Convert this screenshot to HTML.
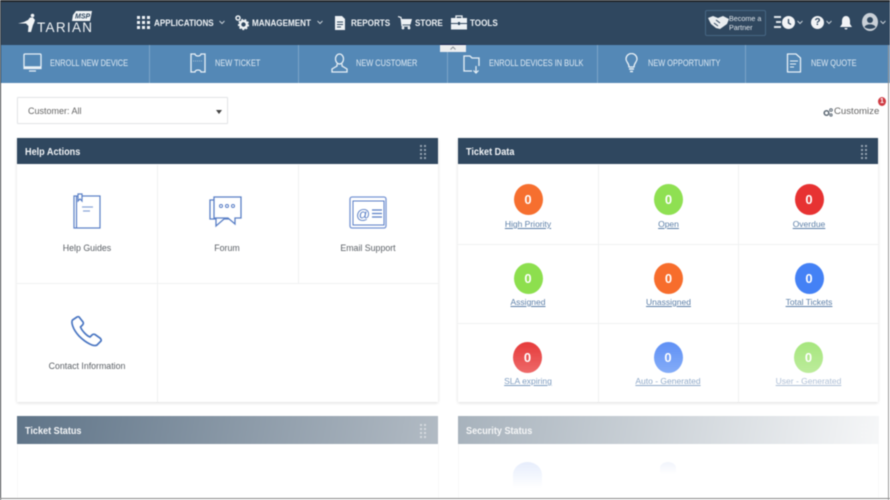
<!DOCTYPE html>
<html><head><meta charset="utf-8">
<style>
html,body{margin:0;padding:0;background:#fff}
#p{position:relative;width:890px;height:500px;overflow:hidden;background:#fff;font-family:"Liberation Sans",sans-serif;filter:blur(.5px)}
#p div,#p span,#p a,#p svg{position:absolute}
.t{white-space:nowrap;line-height:12px}
.nav{color:#eef2f5;font-size:9px;font-weight:bold;top:17px;transform:scaleX(.9);transform-origin:0 0}
.bar{color:#dfeaf3;font-size:9px;top:57px;transform:scaleX(.82);transform-origin:0 0}
.sep{top:45px;width:1px;height:38px;background:#7ba4c8}
.hd{background:#2f475f}
.ht{color:#f2f4f6;font-size:10px;font-weight:bold;transform:scaleX(.91);transform-origin:0 0}
.c{width:29px;height:31px;border-radius:50%;color:#fff;font-weight:bold;font-size:13px;text-align:center;line-height:31px}
.l{width:140px;text-align:center;font-size:8.5px;color:#5c7fa8;text-decoration:underline;line-height:12px}
.g{width:140px;text-align:center;font-size:8.8px;color:#5b6066;line-height:12px}
.ln{background:#f0f1f2}
</style></head><body>
<div id="p">
<div style="left:0;top:0;width:890px;height:45px;background:#2f475f"></div>
<div style="left:0;top:0;width:890px;height:2px;background:#23272c"></div>
<div style="left:0;top:45px;width:890px;height:38px;background:#5488b6"></div>

<!-- logo -->
<svg style="left:15px;top:8px" width="82" height="30" viewBox="0 0 82 30">
<path d="M3 15.500L9 14L13 12L15 9.500L18 9.500L20 12L19 15L18 17L16 24L13 24L13.500 18L11 15.500Z" fill="#f1f4f6"/>
<circle cx="17.500" cy="7.500" r="1.800" fill="#f1f4f6"/>
<text x="22" y="24" font-size="13.500" textLength="55" lengthAdjust="spacing" fill="#f1f4f6" font-family="Liberation Sans">TARIAN</text>
<path d="M58 7L61 3H77L75 13H57Z" fill="#f1f4f6"/>
<text x="60" y="10.500" font-size="7" font-weight="bold" font-style="italic" fill="#2f475f" font-family="Liberation Sans">MSP</text>
</svg>

<!-- nav -->
<svg style="left:137px;top:15px" width="13" height="15" viewBox="0 0 13 15"><g fill="#eef2f5"><rect x="0" y="1" width="3" height="3"/><rect x="5" y="1" width="3" height="3"/><rect x="10" y="1" width="3" height="3"/><rect x="0" y="6" width="3" height="3"/><rect x="5" y="6" width="3" height="3"/><rect x="10" y="6" width="3" height="3"/><rect x="0" y="11" width="3" height="3"/><rect x="5" y="11" width="3" height="3"/><rect x="10" y="11" width="3" height="3"/></g></svg>
<div class="t nav" style="left:154px">APPLICATIONS</div>
<svg style="left:219px;top:20px" width="6" height="5" viewBox="0 0 6 5"><path d="M.5 1L3 3.500L5.500 1" fill="none" stroke="#c5ced6"/></svg>
<svg style="left:235px;top:15px" width="14" height="16" viewBox="0 0 14 16"><circle cx="3" cy="3" r="2" fill="none" stroke="#eef2f5" stroke-width="1.500"/><circle cx="8.500" cy="9.500" r="3.400" fill="none" stroke="#eef2f5" stroke-width="2.400"/><circle cx="8.500" cy="9.500" r="5" fill="none" stroke="#eef2f5" stroke-width="1.200" stroke-dasharray="2 1.500"/></svg>
<div class="t nav" style="left:252px">MANAGEMENT</div>
<svg style="left:317px;top:20px" width="6" height="5" viewBox="0 0 6 5"><path d="M.5 1L3 3.500L5.500 1" fill="none" stroke="#c5ced6"/></svg>
<svg style="left:335px;top:16px" width="10" height="14" viewBox="0 0 10 14"><path d="M0 0H7L10 3V14H0Z" fill="#eef2f5"/><path d="M2 6H8M2 8.500H8M2 11H6" stroke="#2f475f"/></svg>
<div class="t nav" style="left:351px">REPORTS</div>
<svg style="left:398px;top:16px" width="14" height="14" viewBox="0 0 14 14"><path d="M0 0.500L3 1.500L4 10H12" fill="none" stroke="#eef2f5" stroke-width="1.200"/><path d="M3 3H14L12.500 8.500H4Z" fill="#eef2f5"/><circle cx="5" cy="12" r="1.400" fill="#eef2f5"/><circle cx="11" cy="12" r="1.400" fill="#eef2f5"/></svg>
<div class="t nav" style="left:415px">STORE</div>
<svg style="left:451px;top:15px" width="16" height="15" viewBox="0 0 16 15"><path d="M5 3V1H11V3" fill="none" stroke="#eef2f5" stroke-width="1.300"/><rect x="0" y="3" width="16" height="5" fill="#eef2f5"/><rect x="0" y="9" width="16" height="5.500" fill="#eef2f5"/><rect x="7" y="7" width="2" height="3" fill="#2f475f"/></svg>
<div class="t nav" style="left:470px">TOOLS</div>

<!-- right nav -->
<div style="left:705px;top:10px;width:59px;height:24px;border:1px solid #466683;border-radius:2px"></div>
<svg style="left:708px;top:15px" width="21" height="15" viewBox="0 0 21 15"><path d="M0 3L5 1L10 3L15 1L21 4L19 9L12 14L8 13L3 9Z" fill="#e9edf0"/><path d="M8 5L12 8M6 8L10 11" stroke="#2f475f"/></svg>
<div class="t" style="left:729px;top:14px;color:#dfe5ea;font-size:7.200px;line-height:9px;">Become a<br>Partner</div>
<div style="left:774px;top:16px;width:7px;height:2px;background:#dfe5ea"></div>
<div style="left:776px;top:21px;width:5px;height:2px;background:#dfe5ea"></div>
<div style="left:774px;top:26px;width:7px;height:2px;background:#dfe5ea"></div>
<svg style="left:782px;top:16px" width="13" height="13" viewBox="0 0 13 13"><circle cx="6.500" cy="6.500" r="6.500" fill="#f2f4f6"/><path d="M6.500 3V7L9 8.500" fill="none" stroke="#2f475f" stroke-width="1.300"/></svg>
<svg style="left:797px;top:20px" width="6" height="5" viewBox="0 0 6 5"><path d="M.5 1L3 3.500L5.500 1" fill="none" stroke="#c5ced6"/></svg>
<div style="left:811px;top:16px;width:13px;height:13px;border-radius:50%;background:#f2f4f6;color:#2f475f;font-size:10px;font-weight:bold;text-align:center;line-height:13px">?</div>
<svg style="left:826px;top:20px" width="6" height="5" viewBox="0 0 6 5"><path d="M.5 1L3 3.500L5.500 1" fill="none" stroke="#c5ced6"/></svg>
<svg style="left:840px;top:16px" width="12" height="14" viewBox="0 0 12 14"><path d="M6 0C3 0 2 3 2 5V8L0 11H12L10 8V5C10 3 9 0 6 0Z" fill="#f2f4f6"/><path d="M4.500 12H7.500A1.500 1.500 0 0 1 4.500 12Z" fill="#f2f4f6"/></svg>
<svg style="left:862px;top:13px" width="16" height="18" viewBox="0 0 16 18"><ellipse cx="8" cy="9" rx="8" ry="9" fill="#c9d0d7"/><circle cx="8" cy="7" r="3" fill="#2f475f"/><path d="M2.500 14C4 10.500 12 10.500 13.500 14C11 16.500 5 16.500 2.500 14Z" fill="#2f475f"/></svg>
<svg style="left:880px;top:20px" width="6" height="5" viewBox="0 0 6 5"><path d="M.5 1L3 3.500L5.500 1" fill="none" stroke="#c5ced6"/></svg>

<!-- blue bar -->
<div class="sep" style="left:149px"></div><div class="sep" style="left:298px"></div><div class="sep" style="left:447px"></div><div class="sep" style="left:597px"></div><div class="sep" style="left:745px"></div>
<svg style="left:23px;top:53px" width="20" height="20" viewBox="0 0 20 20"><rect x="1" y="1" width="17" height="13" rx="1" fill="none" stroke="#e8f0f6" stroke-width="1.300"/><path d="M1 14H18V15.500H1ZM6 18H13" stroke="#e8f0f6" stroke-width="1.200" fill="#e8f0f6"/></svg>
<div class="t bar" style="left:50px">ENROLL NEW DEVICE</div>
<svg style="left:190px;top:53px" width="16" height="20" viewBox="0 0 16 20"><path d="M1 1H5A3 2 0 0 0 11 1H15V19H11A3 2 0 0 0 5 19H1Z" fill="none" stroke="#e8f0f6" stroke-width="1.300"/><path d="M3 8H13" stroke="#e8f0f6" stroke-width=".6" stroke-dasharray="1 1"/></svg>
<div class="t bar" style="left:215px">NEW TICKET</div>
<svg style="left:331px;top:53px" width="17" height="20" viewBox="0 0 17 20"><ellipse cx="8.500" cy="6" rx="4" ry="5" fill="none" stroke="#e8f0f6" stroke-width="1.300"/><path d="M6 11L6 13L1 16V19H16V16L11 13L11 11" fill="none" stroke="#e8f0f6" stroke-width="1.300"/></svg>
<div class="t bar" style="left:356px">NEW CUSTOMER</div>
<svg style="left:463px;top:54px" width="18" height="20" viewBox="0 0 18 20"><path d="M9 17H1V2H7L9 4H16V12" fill="none" stroke="#e8f0f6" stroke-width="1.300"/><path d="M13 12V19M10.500 16.500L13 19L15.500 16.500" fill="none" stroke="#e8f0f6" stroke-width="1.200"/></svg>
<div class="t bar" style="left:489px">ENROLL DEVICES IN BULK</div>
<svg style="left:625px;top:53px" width="13" height="20" viewBox="0 0 13 20"><path d="M4 14C4 10 1 9 1 6A5.500 5.500 0 0 1 12 6C12 9 9 10 9 14Z" fill="none" stroke="#e8f0f6" stroke-width="1.300"/><path d="M4 16H9M5 18.500H8" stroke="#e8f0f6" stroke-width="1.500"/></svg>
<div class="t bar" style="left:648px">NEW OPPORTUNITY</div>
<svg style="left:786px;top:53px" width="16" height="20" viewBox="0 0 16 20"><path d="M1.500 1H10L14.500 5V19H1.500Z" fill="none" stroke="#e8f0f6" stroke-width="1.300" stroke-linejoin="round"/><path d="M4 8H12M4 11H10M4 14H8" stroke="#e8f0f6"/></svg>
<div class="t bar" style="left:811px">NEW QUOTE</div>

<!-- collapse tab -->
<div style="left:440px;top:45px;width:26px;height:7px;background:#eceef0"></div>
<div style="left:440px;top:44px;width:26px;height:1px;background:#1d2a55"></div>
<svg style="left:450px;top:46px" width="6" height="5" viewBox="0 0 6 5"><path d="M.5 3.500L3 1L5.500 3.500" fill="none" stroke="#8b939b"/></svg>

<!-- select -->
<div style="left:17px;top:97px;width:209px;height:25px;border:1px solid #e3e5e7;border-radius:1px;box-shadow:0 0 1px #eee"></div>
<div class="t" style="left:28px;top:105px;font-size:9px;color:#666">Customer: All</div>
<div style="left:216px;top:110px;width:0;height:0;border-left:3px solid transparent;border-right:3px solid transparent;border-top:4px solid #444"></div>

<!-- customize -->
<svg style="left:823px;top:108px" width="10" height="9" viewBox="0 0 10 9"><circle cx="3.500" cy="5" r="2.300" fill="none" stroke="#5b6773" stroke-width="1.500"/><circle cx="8" cy="2" r="1.300" fill="none" stroke="#5b6773"/><circle cx="8" cy="7" r="1.100" fill="none" stroke="#5b6773"/></svg>
<div class="t" style="left:834px;top:106px;font-size:9.600px;color:#666">Customize</div>
<div style="left:878px;top:97px;width:8px;height:9px;border-radius:50%;background:#cf3b43;color:#fff;font-size:7px;font-weight:bold;text-align:center;line-height:9px">1</div>

<!-- Help Actions panel -->
<div style="left:17px;top:138px;width:421px;height:264px;box-shadow:0 1px 3px rgba(0,0,0,.14);background:#fff"></div>
<div class="hd" style="left:17px;top:138px;width:421px;height:26px"></div>
<div class="t ht" style="left:25px;top:147px">Help Actions</div>
<div class="ln" style="left:157px;top:165px;width:1px;height:237px"></div>
<div class="ln" style="left:298px;top:165px;width:1px;height:118px"></div>
<div class="ln" style="left:17px;top:283px;width:421px;height:1px"></div>

<!-- Ticket Data panel -->
<div style="left:458px;top:138px;width:420px;height:264px;box-shadow:0 1px 3px rgba(0,0,0,.14);background:#fff"></div>
<div class="hd" style="left:458px;top:138px;width:420px;height:26px"></div>
<div class="t ht" style="left:466px;top:147px">Ticket Data</div>
<div class="ln" style="left:598px;top:165px;width:1px;height:237px"></div>
<div class="ln" style="left:738px;top:165px;width:1px;height:237px"></div>
<div class="ln" style="left:458px;top:244px;width:420px;height:1px"></div>
<div class="ln" style="left:458px;top:323px;width:420px;height:1px"></div>

<!-- drag dots -->
<svg style="left:420px;top:145px" width="7" height="14"><g fill="#94a3b1"><rect x="0" y="0" width="2" height="2"/><rect x="4" y="0" width="2" height="2"/><rect x="0" y="4" width="2" height="2"/><rect x="4" y="4" width="2" height="2"/><rect x="0" y="8" width="2" height="2"/><rect x="4" y="8" width="2" height="2"/><rect x="0" y="12" width="2" height="2"/><rect x="4" y="12" width="2" height="2"/></g></svg>
<svg style="left:861px;top:145px" width="7" height="14"><g fill="#94a3b1"><rect x="0" y="0" width="2" height="2"/><rect x="4" y="0" width="2" height="2"/><rect x="0" y="4" width="2" height="2"/><rect x="4" y="4" width="2" height="2"/><rect x="0" y="8" width="2" height="2"/><rect x="4" y="8" width="2" height="2"/><rect x="0" y="12" width="2" height="2"/><rect x="4" y="12" width="2" height="2"/></g></svg>

<!-- help icons -->
<svg style="left:72px;top:193px" width="30" height="36" viewBox="0 0 30 36"><g fill="none" stroke="#5a7fc6" stroke-width="1.200"><rect x="2" y="3" width="26" height="32"/><path d="M4.500 3V35"/><path d="M6 1H10V8L8 6L6 8Z" fill="#fff"/></g><path d="M10 14H21M11 18H18" stroke="#8ba6d8" stroke-width="1.200"/></svg>
<div class="g" style="left:17px;top:242px">Help Guides</div>
<svg style="left:209px;top:195px" width="34" height="34" viewBox="0 0 34 34"><g fill="none" stroke="#5a7fc6" stroke-width="1.300"><path d="M5 5H1V24H7V31L15 24H24"/><path d="M5 2H32V23H26V29L19 23H5Z" fill="#fff"/></g><g fill="none" stroke="#5a7fc6"><circle cx="12" cy="11" r="1.500"/><circle cx="18" cy="11" r="1.500"/><circle cx="24" cy="11" r="1.500"/></g></svg>
<div class="g" style="left:157px;top:242px">Forum</div>
<svg style="left:349px;top:196px" width="38" height="33" viewBox="0 0 38 33"><rect x="1" y="1" width="36" height="31" rx="2" fill="none" stroke="#7795d3" stroke-width="1.300"/><rect x="4" y="5" width="31" height="24" fill="none" stroke="#5a7fc6" stroke-width="1"/><text x="7" y="23" font-size="14" fill="#5a7fc6" font-family="Liberation Sans">@</text><path d="M23 14H33M23 17.500H33M23 21H33" stroke="#5a7fc6" stroke-width="1.300"/></svg>
<div class="g" style="left:298px;top:242px">Email Support</div>
<svg style="left:70px;top:315px" width="32" height="33" viewBox="0 0 32 33"><path d="M7 2L2.500 5C1 7 2.500 14 9 21C16 28 24 32 27 30L31 26C31.500 25 31 24 30 23L25 19.500C24 19 23 19 22 20L20 22C17 21 12 16 10.500 12L12.500 10C13.500 9 13.500 8 13 7L9.500 2.500C9 1.500 8 1.500 7 2Z" fill="none" stroke="#4a76c2" stroke-width="1.700"/></svg>
<div class="g" style="left:17px;top:360px">Contact Information</div>

<!-- ticket circles -->
<div class="c" style="left:513.500px;top:184px;background:#f66f2f">0</div>
<div class="c" style="left:654px;top:184px;background:#8fe052">0</div>
<div class="c" style="left:794.500px;top:184px;background:#e73232">0</div>
<div class="l" style="left:458px;top:218px">High Priority</div>
<div class="l" style="left:598.500px;top:218px">Open</div>
<div class="l" style="left:739px;top:218px">Overdue</div>
<div class="c" style="left:513.500px;top:263px;background:#8ddf4e">0</div>
<div class="c" style="left:654px;top:263px;background:#f76d2c">0</div>
<div class="c" style="left:794.500px;top:263px;background:#4481f5">0</div>
<div class="l" style="left:458px;top:296px">Assigned</div>
<div class="l" style="left:598.500px;top:296px">Unassigned</div>
<div class="l" style="left:739px;top:296px">Total Tickets</div>
<div class="c" style="left:513px;top:342px;background:linear-gradient(#e63a3a,#ee6a6a)">0</div>
<div class="c" style="left:653.500px;top:342px;background:linear-gradient(#5f90f5,#85adf8)">0</div>
<div class="c" style="left:794px;top:342px;background:linear-gradient(#a6e67d,#bdec9c)">0</div>
<div class="l" style="left:458px;top:375px;color:#7f9dc0">SLA expiring</div>
<div class="l" style="left:598px;top:375px;color:#8fa9c9">Auto - Generated</div>
<div class="l" style="left:738.500px;top:375px;color:#aebfd6">User - Generated</div>

<!-- bottom headers -->
<div style="left:17px;top:416px;width:421px;height:28px;background:linear-gradient(100deg,#5f7488,#b2bbc4)"></div>
<div class="t ht" style="left:25px;top:426px">Ticket Status</div>
<div style="left:458px;top:416px;width:421px;height:28px;background:linear-gradient(100deg,#a7b2bc,#f6f7f8)"></div>
<div class="t ht" style="left:466px;top:426px;color:#f5f6f7">Security Status</div>
<svg style="left:420px;top:424px" width="7" height="14"><g fill="#d5dade"><rect x="0" y="0" width="2" height="2"/><rect x="4" y="0" width="2" height="2"/><rect x="0" y="4" width="2" height="2"/><rect x="4" y="4" width="2" height="2"/><rect x="0" y="8" width="2" height="2"/><rect x="4" y="8" width="2" height="2"/><rect x="0" y="12" width="2" height="2"/><rect x="4" y="12" width="2" height="2"/></g></svg>
<svg style="left:861px;top:424px" width="7" height="14"><g fill="#f4f5f6"><rect x="0" y="0" width="2" height="2"/><rect x="4" y="0" width="2" height="2"/><rect x="0" y="4" width="2" height="2"/><rect x="4" y="4" width="2" height="2"/><rect x="0" y="8" width="2" height="2"/><rect x="4" y="8" width="2" height="2"/><rect x="0" y="12" width="2" height="2"/><rect x="4" y="12" width="2" height="2"/></g></svg>
<div class="ln" style="left:17px;top:444px;width:1px;height:54px;background:#f8f8f8"></div>
<div class="ln" style="left:458px;top:444px;width:1px;height:54px;background:#f8f8f8"></div>
<div class="ln" style="left:438px;top:444px;width:1px;height:54px;background:#f8f8f8"></div>
<div class="ln" style="left:878px;top:444px;width:1px;height:54px;background:#f8f8f8"></div>
<div style="left:513px;top:462px;width:29px;height:26px;border-radius:50% 50% 0 0;background:linear-gradient(#e6edfc,#fff)"></div>
<div style="left:660px;top:462px;width:16px;height:12px;border-radius:50% 50% 0 0;background:linear-gradient(#f1f4fc,#fff)"></div>

<!-- frame -->
<div style="left:0;top:0;width:1px;height:500px;background:#3a3d40"></div>
<div style="left:888px;top:45px;width:1px;height:455px;background:#9a9a9a"></div>
<div style="left:0;top:498px;width:890px;height:1px;background:#8b8b8b"></div>
</div>
</body></html>
